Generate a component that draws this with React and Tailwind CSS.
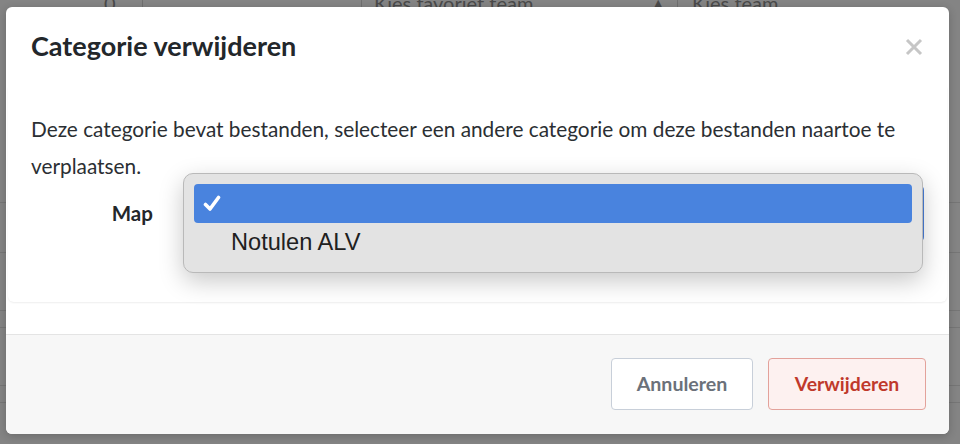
import React from "react";

function BgPage() {
  const rowsLeft = [202, 252, 310, 327, 385, 402];
  return (
    <div className="absolute inset-0 bg-[#848484]">
      <div className="flex h-[14px] -mt-[7px] items-start text-[20px] leading-[20px] text-[#4a4a4a] font-['Lato',sans-serif]">
        <div className="w-[142px] pl-[104px]">0</div>
        <div className="w-[219px] border-l border-[#6f6f6f] h-full" />
        <div className="w-[316px] border-l border-[#6f6f6f] h-full pl-[12px] flex justify-between pr-[12px]">
          <span>Kies favoriet team</span>
          <span className="text-[14px]">▲</span>
        </div>
        <div className="flex-1 border-l border-[#6f6f6f] h-full pl-[14px]">Kies team</div>
      </div>
      {rowsLeft.map((y) => (
        <div key={y} className="absolute left-0 right-0 h-px bg-[#767676]" style={{ top: y }} />
      ))}
    </div>
  );
}

export default function App() {
  return (
    <div className="relative w-[960px] h-[444px] overflow-hidden font-['Lato',sans-serif]">
      <BgPage />

      {/* Modal */}
      <div className="absolute left-[6px] top-[7px] w-[943px] h-[427px] bg-white rounded-[6px] flex flex-col overflow-hidden shadow-[0_2px_8px_rgba(0,0,0,0.2)]">
        {/* header */}
        <div className="h-[80px] px-[25px] pt-[20px] flex justify-between items-start">
          <h2 className="text-[27px] leading-[38px] font-bold text-[#23272b]">Categorie verwijderen</h2>
          <svg className="mt-[11px] mr-[1px]" width="18" height="18" viewBox="0 0 18 18">
            <path d="M2 2 L16 16 M16 2 L2 16" stroke="#c6c6c6" strokeWidth="3" />
          </svg>
        </div>
        {/* body card */}
        <div className="h-[215px] mx-[2px] rounded-b-[6px] shadow-[0_1px_2px_rgba(0,0,0,0.07)] px-[23px] pt-[23px]">
          <p className="text-[20.8px] leading-[37px] text-[#2b2f33]">
            Deze categorie bevat bestanden, selecteer een andere categorie om deze bestanden naartoe te verplaatsen.
          </p>
          <div className="mt-[1px] flex items-center h-[57px]">
            <label className="w-[122px] text-right text-[20.5px] font-bold text-[#23272b]">Map</label>
            <div className="ml-[32px] w-[740px] h-[57px] rounded-[5px] border-2 border-[#4a7fd9]" />
          </div>
        </div>
        <div className="h-[32px]" />
        {/* footer */}
        <div className="flex-1 bg-[#f7f7f7] border-t border-[#e4e4e4] flex justify-end items-start pt-[23px] pr-[23px] gap-[15px]">
          <button className="w-[142px] h-[52px] rounded-[4px] bg-white border border-[#c8cfd9] text-[19.6px] font-bold text-[#6b717a]">
            Annuleren
          </button>
          <button className="w-[158px] h-[52px] rounded-[4px] bg-[#fdf1f0] border border-[#e3a29b] text-[19.4px] font-bold text-[#c0392b]">
            Verwijderen
          </button>
        </div>
      </div>

      {/* Native select popup */}
      <div className="absolute left-[183px] top-[173px] w-[740px] h-[100px] rounded-[10px] bg-[#e3e3e3] border border-[#b9b9b9] shadow-[0_8px_24px_rgba(0,0,0,0.22)] p-[10px] font-['Liberation_Sans',sans-serif]">
        <div className="h-[39px] rounded-[4px] bg-[#4983de] flex items-center pl-[9px]">
          <svg width="18" height="17" viewBox="0 0 18 17">
            <path d="M2.5 9.5 L7 14 L15.5 2.5" fill="none" stroke="#ffffff" strokeWidth="3.6" strokeLinecap="round" strokeLinejoin="round" />
          </svg>
        </div>
        <div className="h-[39px] flex items-center pl-[37px] text-[23.6px] text-[#202020]">Notulen ALV</div>
      </div>
    </div>
  );
}
